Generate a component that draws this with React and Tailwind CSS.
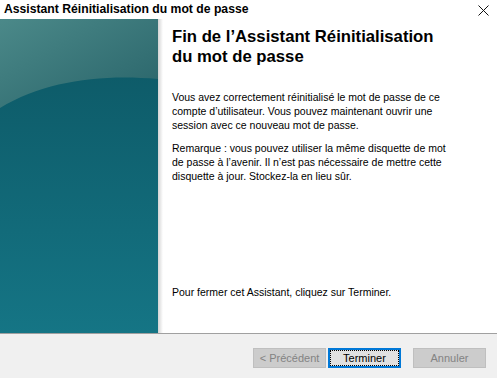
import React from "react";

const WizardArt = () => (
    <svg width="158" height="314" viewBox="0 0 158 314" className="block">
        <defs>
            <linearGradient id="top" x1="0" y1="0" x2="1" y2="1">
                <stop offset="0" stopColor="#4b8989" />
                <stop offset="1" stopColor="#286369" />
            </linearGradient>
            <linearGradient id="bottom" x1="0" y1="0" x2="0" y2="1">
                <stop offset="0" stopColor="#0c5663" />
                <stop offset="1" stopColor="#157585" />
            </linearGradient>
        </defs>
        <rect width="158" height="314" fill="url(#bottom)" />
        <path d="M0 0 H158 V60 C100 55 45 62 0 89 Z" fill="url(#top)" />
    </svg>
);

const Button = ({ children, disabled, focused }) => {
    if (disabled) {
        return (
            <div className="w-[73px] h-[20px] flex items-center justify-center bg-[#cccccc] border border-[#bfbfbf] text-[#838383]">
                {children}
            </div>
        );
    }
    return (
        <div
            className={`w-[73px] h-[20px] flex items-center justify-center bg-[#e1e1e1] text-black ${
                focused ? "border-2 border-[#0078d7]" : "border border-[#adadad]"
            }`}
        >
            <div className="w-full h-full flex items-center justify-center border border-dotted border-black">
                {children}
            </div>
        </div>
    );
};

export default function App() {
    return (
        <div
            className="w-[497px] h-[378px] flex flex-col bg-white overflow-hidden"
            style={{ fontFamily: '"Liberation Sans", Arial, sans-serif' }}
        >
            {/* title bar */}
            <div className="h-[19px] flex items-center justify-between pl-[4px] pr-[8px] bg-white">
                <span className="text-[12.2px] font-bold leading-none text-black">
                    Assistant Réinitialisation du mot de passe
                </span>
                <svg width="11" height="11" viewBox="0 0 11 11" className="mt-[2px]">
                    <path d="M0.5 0.5 L10.5 10.5 M10.5 0.5 L0.5 10.5" stroke="#111" strokeWidth="1" />
                </svg>
            </div>

            {/* body */}
            <div className="h-[314px] flex">
                <WizardArt />
                <div className="w-[5px] h-full bg-gradient-to-r from-[#d4d4d4] to-white" />
                <div className="flex-1 pl-[9px] pr-4 pt-[8px] flex flex-col text-black">
                    <h1 className="text-[16.7px] font-bold leading-[20px]">
                        Fin de l’Assistant Réinitialisation
                        <br />
                        du mot de passe
                    </h1>
                    <p className="mt-[23px] text-[10.5px] leading-[14px]">
                        Vous avez correctement réinitialisé le mot de passe de ce
                        <br />
                        compte d’utilisateur. Vous pouvez maintenant ouvrir une
                        <br />
                        session avec ce nouveau mot de passe.
                    </p>
                    <p className="mt-[9px] text-[10.5px] leading-[14px]">
                        Remarque : vous pouvez utiliser la même disquette de mot
                        <br />
                        de passe à l’avenir. Il n’est pas nécessaire de mettre cette
                        <br />
                        disquette à jour. Stockez-la en lieu sûr.
                    </p>
                    <p className="mt-auto mb-[34px] text-[10.5px] leading-[14px]">
                        Pour fermer cet Assistant, cliquez sur Terminer.
                    </p>
                </div>
            </div>

            <div className="h-px bg-[#a0a0a0]" />

            {/* footer */}
            <div className="flex-1 bg-[#f0f0f0] flex justify-end items-start pt-[14px] pr-[11px] text-[11px]">
                <Button disabled>&lt; Précédent</Button>
                <div className="w-[2px]" />
                <Button focused>Terminer</Button>
                <div className="w-[12px]" />
                <Button disabled>Annuler</Button>
            </div>
        </div>
    );
}
